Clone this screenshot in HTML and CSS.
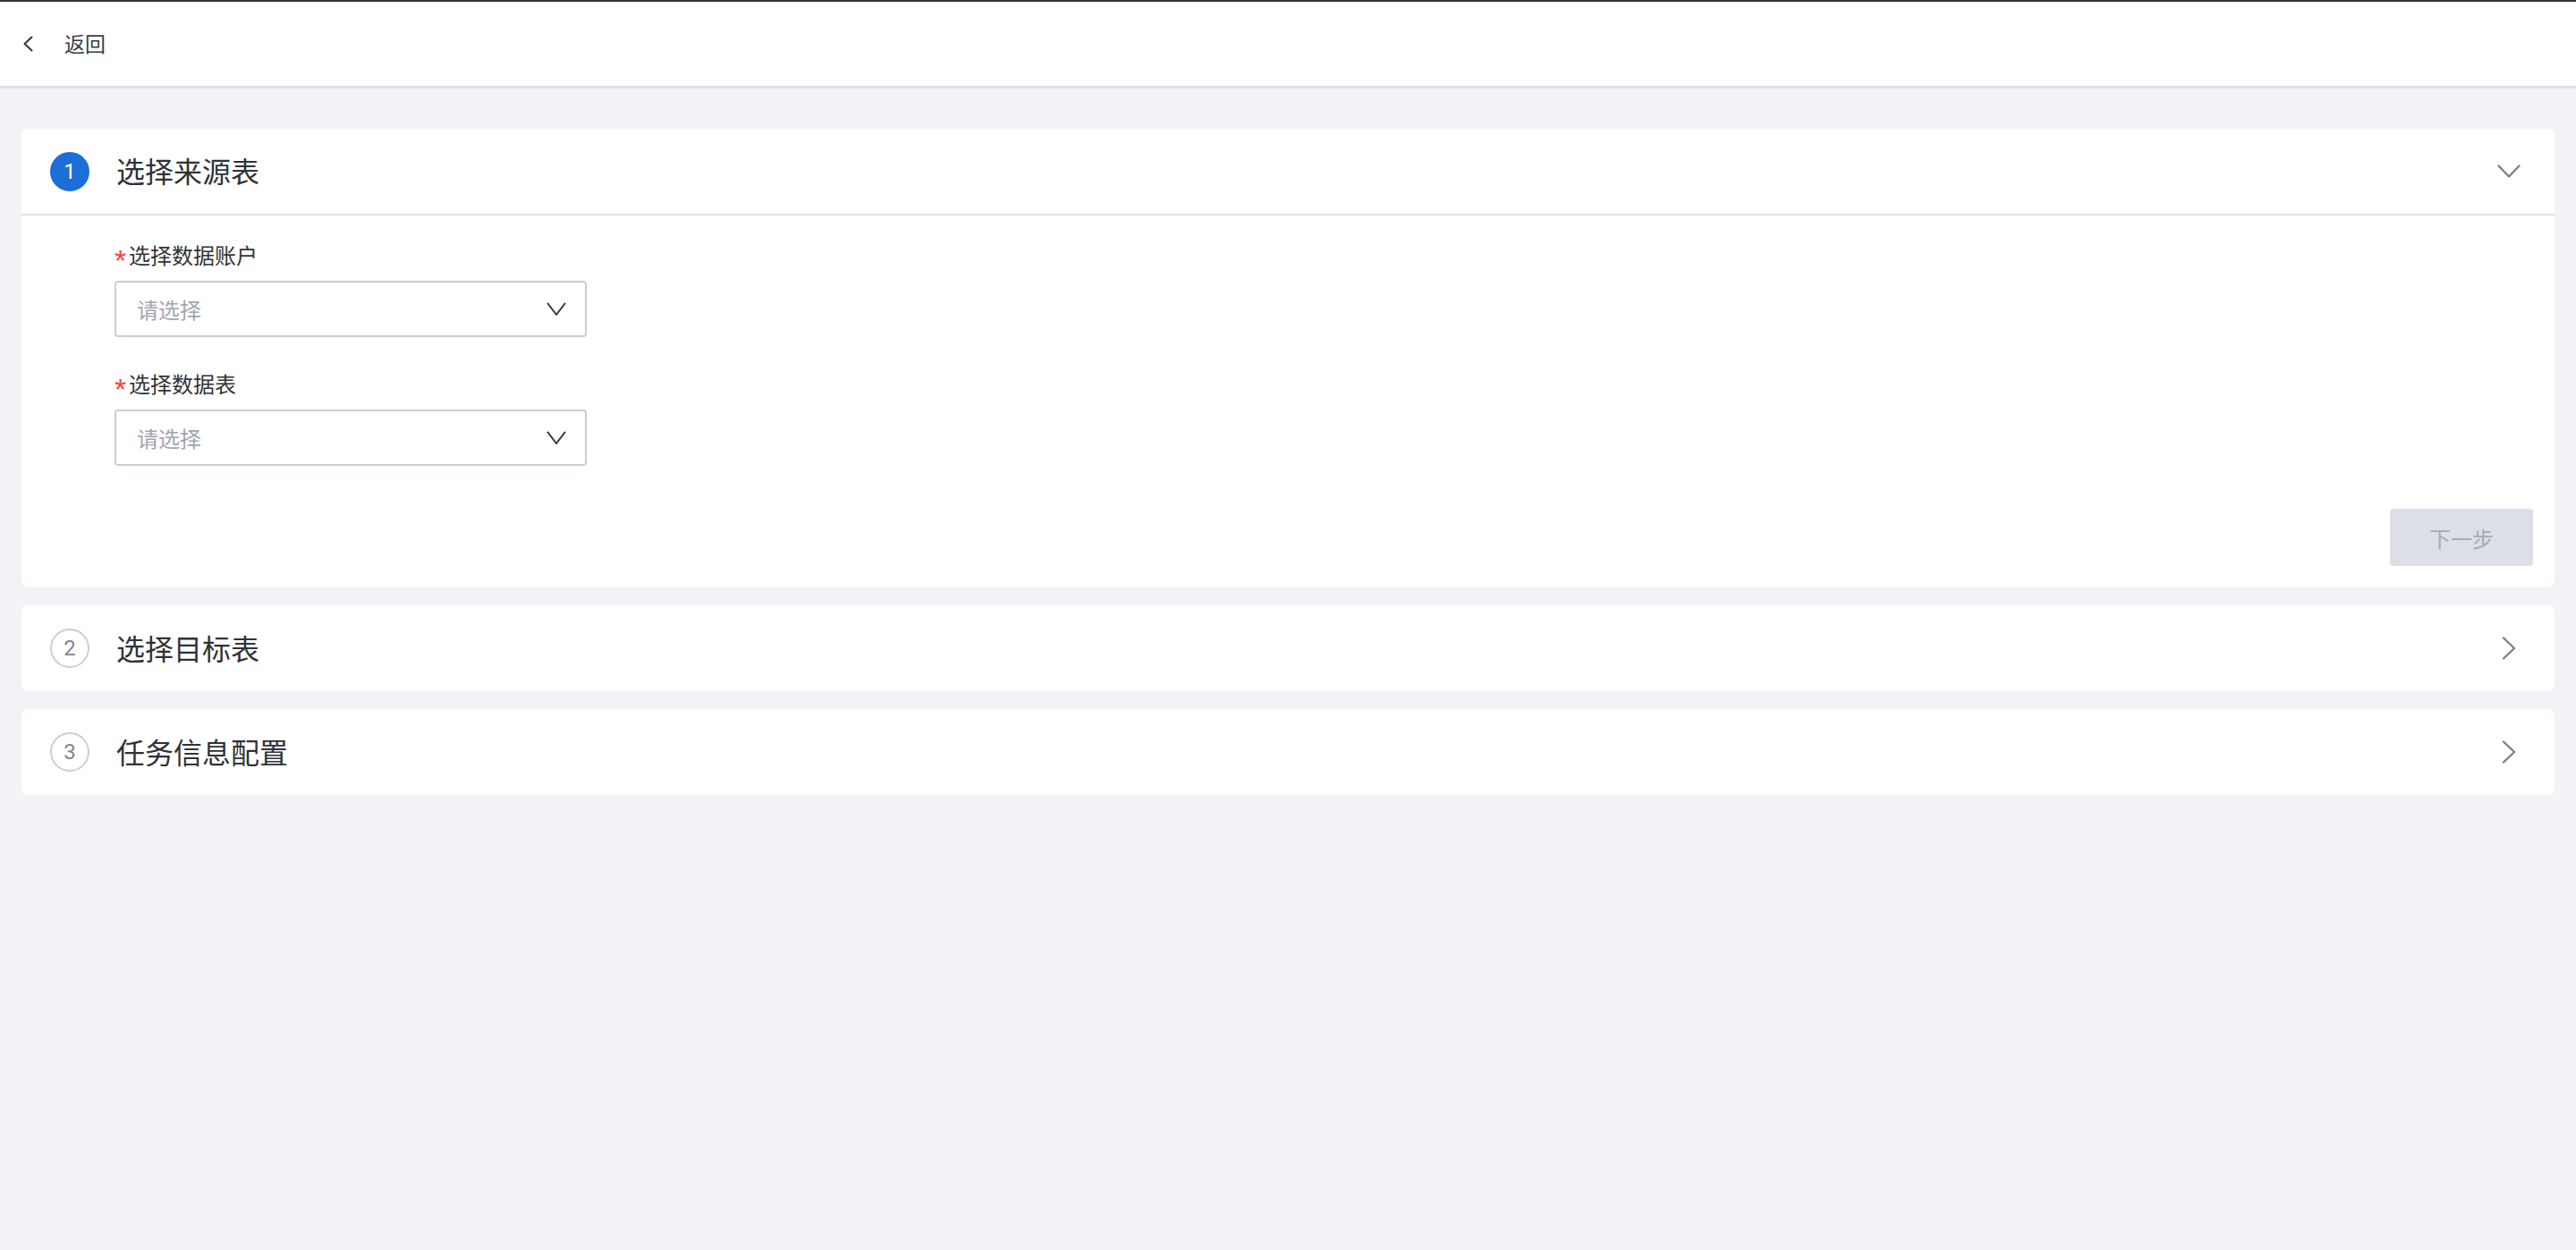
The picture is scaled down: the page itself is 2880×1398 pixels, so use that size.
FILE: index.html
```html
<!DOCTYPE html>
<html lang="zh">
<head>
<meta charset="utf-8">
<title>任务</title>
<link rel="stylesheet" href="styles.css">
</head>
<body>
<header class="topbar">
  <svg class="back-icon" width="12" height="18" viewBox="0 0 12 18"><polyline points="10.5,1.5 2.5,9 10.5,16.5" fill="none" stroke="#333" stroke-width="2" stroke-linecap="round" stroke-linejoin="round"/></svg>
  <span class="back-text">返回</span>
</header>
<main class="main">
  <section class="card">
    <div class="card-head open">
      <span class="step active">1</span>
      <span class="card-title">选择来源表</span>
      <span class="head-arrow"><svg width="26" height="16" viewBox="0 0 26 16"><polyline points="1.5,1.5 13,13.5 24.5,1.5" fill="none" stroke="#7b818b" stroke-width="2.4" stroke-linecap="round" stroke-linejoin="round"/></svg></span>
    </div>
    <div class="card-body">
      <div class="field">
        <label class="field-label"><span class="req">*</span>选择数据账户</label>
        <div class="select">
          <span class="placeholder">请选择</span>
          <svg width="22" height="16" viewBox="0 0 22 16"><polyline points="1.5,1.5 11,14 20.5,1.5" fill="none" stroke="#333" stroke-width="2" stroke-linecap="round" stroke-linejoin="round"/></svg>
        </div>
      </div>
      <div class="field field-last">
        <label class="field-label"><span class="req">*</span>选择数据表</label>
        <div class="select">
          <span class="placeholder">请选择</span>
          <svg width="22" height="16" viewBox="0 0 22 16"><polyline points="1.5,1.5 11,14 20.5,1.5" fill="none" stroke="#333" stroke-width="2" stroke-linecap="round" stroke-linejoin="round"/></svg>
        </div>
      </div>
      <div class="actions">
        <button class="btn-next" disabled>下一步</button>
      </div>
    </div>
  </section>
  <section class="card">
    <div class="card-head">
      <span class="step">2</span>
      <span class="card-title">选择目标表</span>
      <span class="head-arrow"><svg width="16" height="26" viewBox="0 0 16 26"><polyline points="2,1.5 14,13 2,24.5" fill="none" stroke="#7b818b" stroke-width="2.4" stroke-linecap="round" stroke-linejoin="round"/></svg></span>
    </div>
  </section>
  <section class="card">
    <div class="card-head">
      <span class="step">3</span>
      <span class="card-title">任务信息配置</span>
      <span class="head-arrow"><svg width="16" height="26" viewBox="0 0 16 26"><polyline points="2,1.5 14,13 2,24.5" fill="none" stroke="#7b818b" stroke-width="2.4" stroke-linecap="round" stroke-linejoin="round"/></svg></span>
    </div>
  </section>
</main>
</body>
</html>
```
FILE: styles.css
```css
html, body {
  margin: 0;
  padding: 0;
}
body {
  background: #f2f3f7;
  font-family: "Noto Sans CJK SC", "Noto Sans", Roboto, sans-serif;
  color: #333;
  min-height: 1398px;
}
.topbar {
  box-sizing: border-box;
  height: 99px;
  background: #fff;
  border-top: 2px solid #333;
  border-bottom: 3px solid #dde0e6;
  display: flex;
  align-items: center;
  padding-left: 25px;
}
.back-icon {
  display: block;
}
.back-text {
  margin-left: 35px;
  margin-bottom: 3px;
  font-size: 23px;
  color: #3a3d42;
}
.main {
  padding: 45px 24px 0 24px;
}
.card {
  background: #fff;
  border-radius: 8px;
  margin-bottom: 20px;
}
.card-head {
  box-sizing: border-box;
  height: 96px;
  display: flex;
  align-items: center;
  padding: 0 38px 0 32px;
}
.card-head.open {
  height: 97px;
  border-bottom: 2px solid #dfe2e7;
}
.step {
  box-sizing: border-box;
  width: 44px;
  height: 44px;
  border-radius: 50%;
  border: 2px solid #c9ced7;
  color: #7f8590;
  font-family: Roboto, "Noto Sans", sans-serif;
  font-size: 24px;
  display: flex;
  align-items: center;
  justify-content: center;
  flex: none;
}
.step.active {
  background: #1b6fd6;
  border-color: #1b6fd6;
  color: #fff;
}
.card-title {
  margin-left: 30px;
  margin-bottom: 3px;
  font-size: 32px;
  color: #2f3237;
  flex: 1;
}
.head-arrow {
  width: 26px;
  display: flex;
  justify-content: center;
  align-items: center;
  flex: none;
}
.head-arrow svg {
  display: block;
}
.card-body {
  padding: 29px 24px 24px 104px;
}
.field {
  margin-bottom: 37px;
}
.field-last {
  margin-bottom: 48px;
}
.field-label {
  display: block;
  font-size: 24px;
  line-height: 30px;
  color: #333;
}
.req {
  display: inline-block;
  width: 16px;
  font-family: "Liberation Sans", Arial, sans-serif;
  font-size: 34px;
  line-height: 0;
  vertical-align: -8px;
  color: #f0453a;
}
.select {
  box-sizing: border-box;
  margin-top: 14px;
  width: 528px;
  height: 63px;
  border: 2px solid #c9ced6;
  border-radius: 4px;
  display: flex;
  align-items: center;
  justify-content: space-between;
  padding: 0 21px 0 23px;
}
.placeholder {
  font-size: 24px;
  color: #a0a5ae;
}
.select svg {
  display: block;
}
.actions {
  display: flex;
  justify-content: flex-end;
}
.btn-next {
  width: 160px;
  height: 64px;
  border: none;
  border-radius: 4px;
  background: #dcdfe6;
  color: #a6abb4;
  font-family: "Noto Sans CJK SC", sans-serif;
  font-size: 24px;
  padding: 0;
}
```
